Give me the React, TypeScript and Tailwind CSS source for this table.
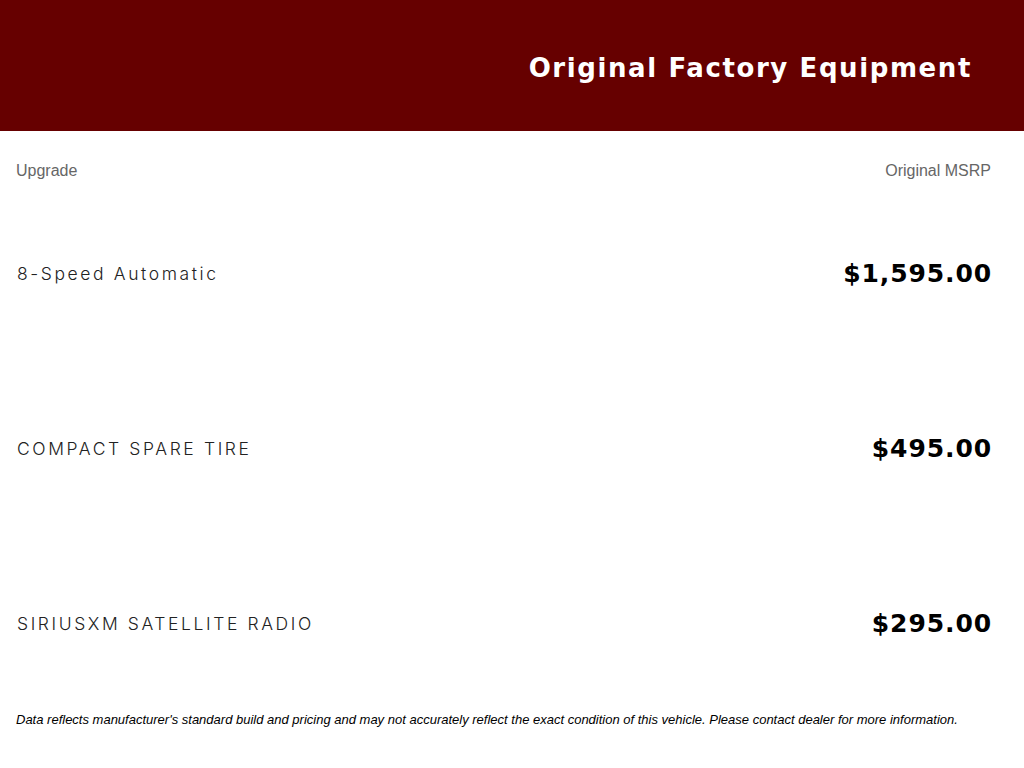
const items = [
  { name: "8-Speed Automatic", price: "$1,595.00" },
  { name: "COMPACT SPARE TIRE", price: "$495.00" },
  { name: "SIRIUSXM SATELLITE RADIO", price: "$295.00" },
]

export default function App() {
  return (
    <div className="w-[1024px] h-[768px] bg-white overflow-hidden">
      {/* banner */}
      <div className="h-[131px] bg-[#660000] flex items-center justify-end pr-[52px]">
        <h1 className="text-white text-[26px] font-bold tracking-[1.6px] font-['DejaVu_Sans',sans-serif] leading-none mt-[4px]">
          Original Factory Equipment
        </h1>
      </div>

      <div className="pl-[16px] pr-[32px]">
        <div className="flex justify-between items-center h-[24px] mt-[28px] text-[16px] text-[#666] font-['Liberation_Sans',sans-serif]">
          <span>Upgrade</span>
          <span className="pr-[1px]">Original MSRP</span>
        </div>

        <div className="flex flex-col gap-[135px] mt-[71px]">
          {items.map((it) => (
            <div key={it.name} className="flex justify-between items-center h-[40px]">
              <span className="pl-[1px] text-[17.5px] font-light tracking-[2.6px] text-[#222] font-['Inter',sans-serif]">
                {it.name}
              </span>
              <span className="text-[25px] font-bold tracking-[0.9px] text-black font-['DejaVu_Sans',sans-serif]">
                {it.price}
              </span>
            </div>
          ))}
        </div>

        <p className="mt-[68px] text-[13px] italic text-black font-['Liberation_Sans',sans-serif] leading-[16px]">
          Data reflects manufacturer's standard build and pricing and may not accurately reflect the exact condition of this vehicle. Please contact dealer for more information.
        </p>
      </div>
    </div>
  )
}
